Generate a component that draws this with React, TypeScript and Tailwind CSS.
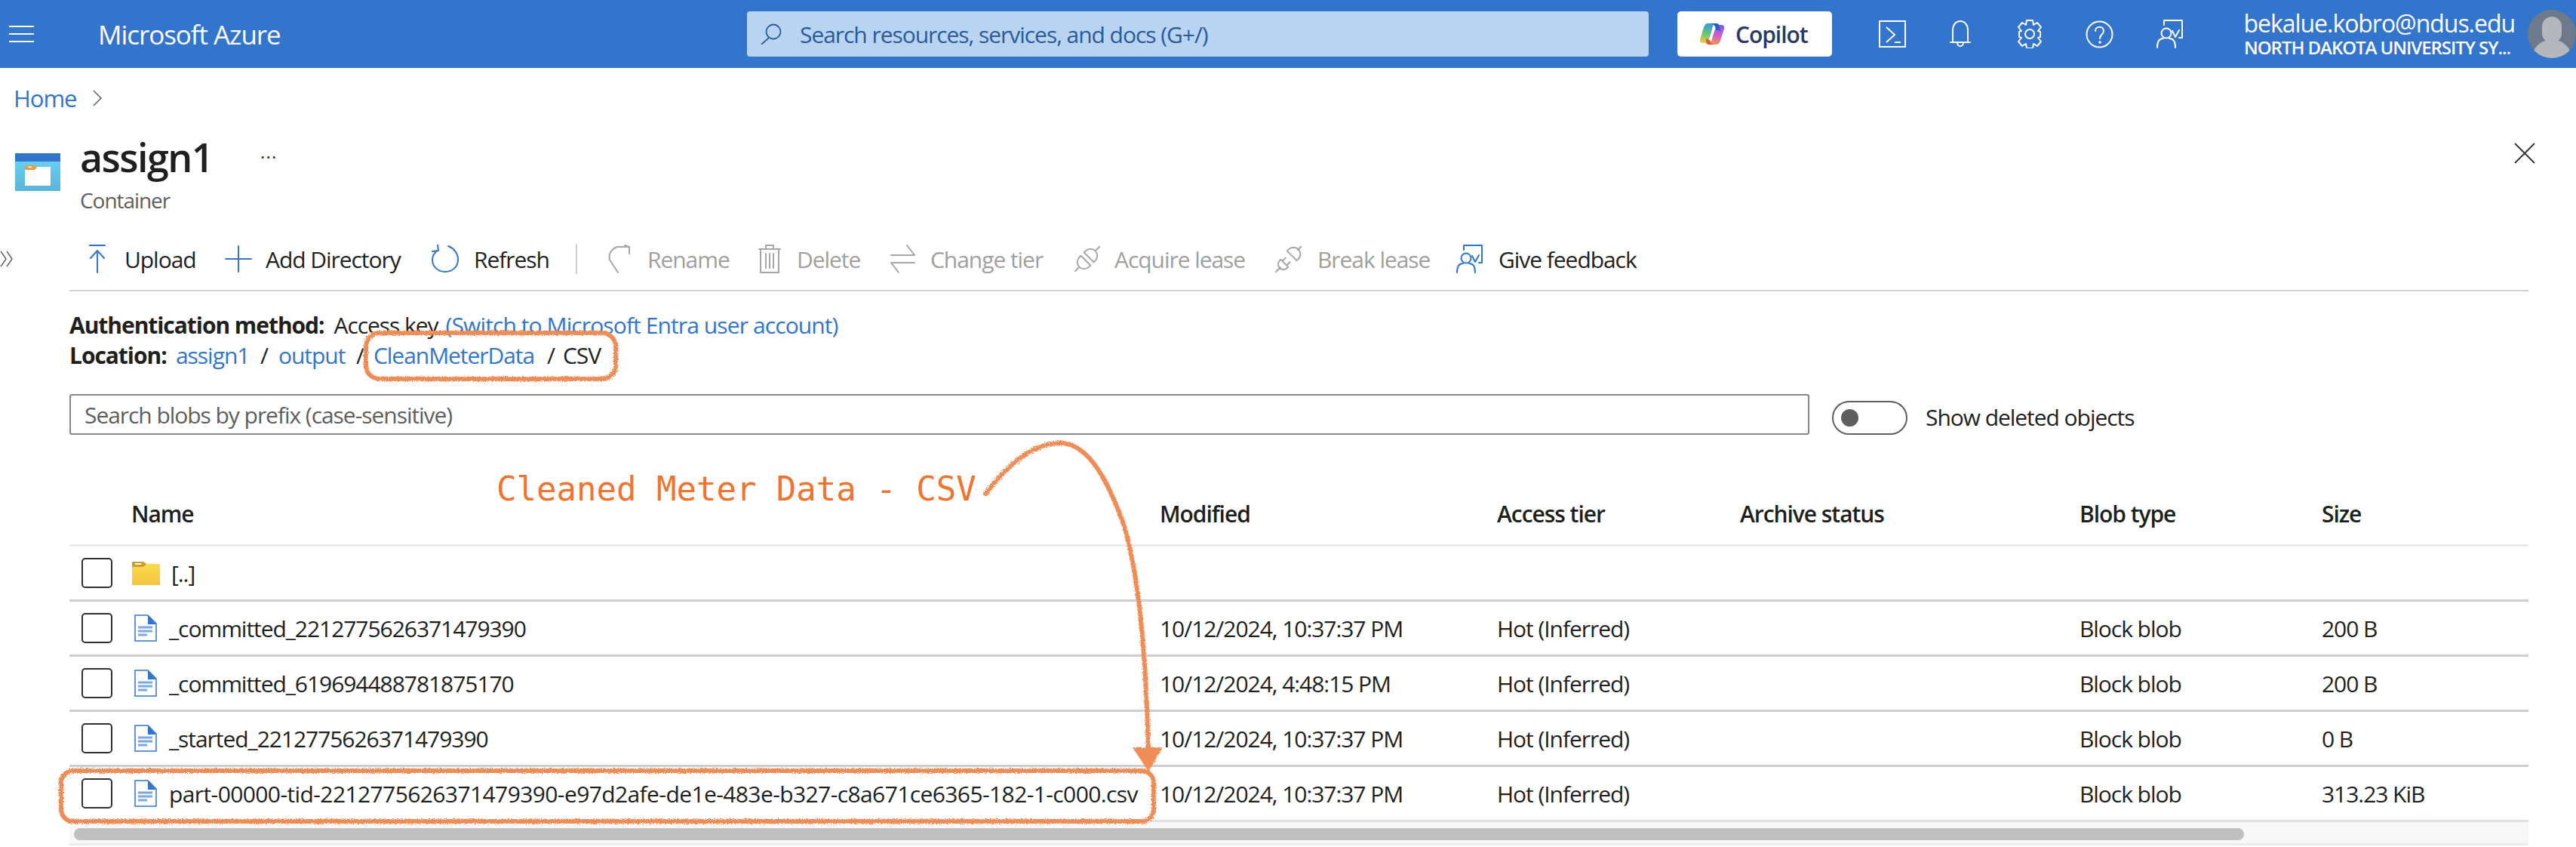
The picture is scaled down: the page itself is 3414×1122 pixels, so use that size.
import React from "react";

const S = ({ w, h, c = "currentColor", sw = 2, children }: { w: number; h: number; c?: string; sw?: number; children: React.ReactNode }) => (
  <svg width={w} height={h} viewBox={`0 0 ${w} ${h}`} fill="none" stroke={c} strokeWidth={sw} strokeLinecap="round" strokeLinejoin="round" className="shrink-0">
    {children}
  </svg>
);

const Feedback = ({ c }: { c: string }) => (
  <S w={36} h={38} c={c} sw={2}>
    <path d="M10 7V1h24v23h-4M21 15l4 8 5-9" />
    <circle cx="13" cy="18" r="6.5" />
    <path d="M1 37c0-10 4-12 8-12M17 25c4 0 8 2 8 12" />
  </S>
);

const Plug = ({ broken }: { broken?: boolean }) => (
  <S w={36} h={38} c="#a6a6a6" sw={2}>
    <g transform="rotate(-45 18 19)">
      {broken ? (
        <path d="M-6 19H2M10 12H8a7 7 0 0 0 0 14h2zM10 15h6M10 23h6M24 10h3a8 8 0 0 1 0 18h-3zM35 19h6" />
      ) : (
        <path d="M-5 19H3M15 10h-3a9 9 0 0 0 0 18h3zM21 10h3a9 9 0 0 1 0 18h-3zM33 19h8" />
      )}
    </g>
  </S>
);

const icons: Record<string, React.ReactNode> = {
  upload: (
    <S w={22} h={38} c="#3275cd">
      <path d="M0 1h21M11 37V8M2 18l9-10 9 10" />
    </S>
  ),
  add: (
    <S w={36} h={36} c="#3275cd">
      <path d="M18 1v34M1 18h34" />
    </S>
  ),
  refresh: (
    <S w={36} h={38} c="#3275cd">
      <path d="M9 8C3 12 1 17 1 21c0 9 7 16 17 16s17-7 17-16c0-8-5-15-13-18M8 1l1 8-8 1" transform="translate(0 -1)" />
    </S>
  ),
  rename: (
    <S w={30} h={38} c="#a6a6a6">
      <path d="M12 3C4 6 0 13 2 20l11 17M12 3h16M22 1l6 2v9" />
    </S>
  ),
  del: (
    <S w={30} h={38} c="#a6a6a6">
      <path d="M1 6h28M10 6V1h10v5M3 6v31h24V6M10 12v19M15 12v19M20 12v19" />
    </S>
  ),
  tier: (
    <S w={33} h={38} c="#a6a6a6">
      <path d="M1 14h31M22 1l10 13M32 24H1M11 37L1 24" />
    </S>
  ),
  acquire: <Plug />,
  brk: <Plug broken />,
  feedback: <Feedback c="#3275cd" />,
};

const tools = [
  { k: "upload", t: "Upload", w: "w-[180px]", i: "w-[47px]", d: false },
  { k: "add", t: "Add Directory", w: "w-[274px]", i: "w-[54px]", d: false },
  { k: "refresh", t: "Refresh", w: "w-[191px]", i: "w-[56px]", d: false },
  { k: "sep", t: "", w: "w-[43px]", i: "", d: false },
  { k: "rename", t: "Rename", w: "w-[199px]", i: "w-[52px]", d: true },
  { k: "del", t: "Delete", w: "w-[175px]", i: "w-[51px]", d: true },
  { k: "tier", t: "Change tier", w: "w-[243px]", i: "w-[53px]", d: true },
  { k: "acquire", t: "Acquire lease", w: "w-[267px]", i: "w-[54px]", d: true },
  { k: "brk", t: "Break lease", w: "w-[240px]", i: "w-[56px]", d: true },
  { k: "feedback", t: "Give feedback", w: "w-[260px]", i: "w-[56px]", d: false },
];

const rows = [
  { n: "_committed_2212775626371479390", m: "10/12/2024, 10:37:37 PM", s: "200 B" },
  { n: "_committed_619694488781875170", m: "10/12/2024, 4:48:15 PM", s: "200 B" },
  { n: "_started_2212775626371479390", m: "10/12/2024, 10:37:37 PM", s: "0 B" },
  { n: "part-00000-tid-2212775626371479390-e97d2afe-de1e-483e-b327-c8a671ce6365-182-1-c000.csv", m: "10/12/2024, 10:37:37 PM", s: "313.23 KiB" },
];

const grid = "grid grid-cols-[82px_1363px_447px_322px_450px_321px_274px] items-center";

const Checkbox = () => <div className="ml-4 w-[41px] h-[40px] rounded-[5px] border-2 border-[#323130]" />;

const FileIcon = () => (
  <svg width="30" height="36" viewBox="0 0 30 36" className="shrink-0 ml-[4px]">
    <path d="M1 1h17l11 11v23H1z" fill="#fff" stroke="#3275cd" strokeWidth="1.5" />
    <path d="M18 1l11 12H18z" fill="#3275cd" />
    <path d="M5 17h19M5 22h19M5 27h12" stroke="#7aa7e6" strokeWidth="3" />
  </svg>
);

const FolderIcon = () => (
  <svg width="37" height="31" viewBox="0 0 37 31" className="shrink-0 ml-[1px]">
    <defs>
      <linearGradient id="fold" x1="0" y1="0" x2="0" y2="1">
        <stop offset="0" stopColor="#fbdc4e" />
        <stop offset="1" stopColor="#f5c33d" />
      </linearGradient>
    </defs>
    <rect x="0" y="3" width="37" height="28" fill="url(#fold)" />
    <path d="M0 0h15l4 3-4 4H0z" fill="#cf9e2f" />
    <rect x="4" y="2" width="8" height="2" fill="#fff" />
  </svg>
);

const Cell = ({ children, cls = "" }: { children?: React.ReactNode; cls?: string }) => (
  <div className={`whitespace-nowrap ${cls}`}>{children}</div>
);

export default function App() {
  return (
    <div className="relative w-[3414px] h-[1122px] overflow-hidden bg-white text-[#201f1e] font-['Open_Sans',sans-serif] text-[30px] tracking-[-0.035em]">
      {/* top bar */}
      <header className="h-[90px] bg-[#3375cd] flex items-center text-white">
        <div className="ml-[12px] w-[118px] shrink-0">
          <svg width="33" height="24" viewBox="0 0 33 24" stroke="#fff" strokeWidth="2">
            <path d="M0 2h33M0 12h33M0 22h33" />
          </svg>
        </div>
        <div className="w-[860px] shrink-0 text-[35px] font-medium leading-none">Microsoft Azure</div>
        <div className="w-[1195px] h-[60px] shrink-0 rounded-[4px] bg-[#b9d4f1] flex items-center pl-[18px] text-[#2a5a9a]">
          <svg width="28" height="28" viewBox="0 0 28 28" fill="none" stroke="#2a5a9a" strokeWidth="1.8" className="shrink-0">
            <circle cx="17" cy="11" r="9.5" />
            <path d="M11 19L1 28" />
          </svg>
          <span className="ml-[24px]">Search resources, services, and docs (G+/)</span>
        </div>
        <div className="ml-[38px] w-[205px] h-[60px] shrink-0 rounded-[5px] bg-white flex items-center pl-[29px] text-[#2c3a63] font-semibold">
          <svg width="35" height="32" viewBox="0 0 35 32" className="shrink-0">
            <defs>
              <linearGradient id="cpA" x1="0.5" y1="0" x2="0.2" y2="1">
                <stop offset="0" stopColor="#3b9be0" />
                <stop offset="0.5" stopColor="#62c57a" />
                <stop offset="1" stopColor="#f2d03a" />
              </linearGradient>
              <linearGradient id="cpB" x1="0.6" y1="0" x2="0.4" y2="1">
                <stop offset="0" stopColor="#8a5ae6" />
                <stop offset="0.55" stopColor="#d45fc4" />
                <stop offset="1" stopColor="#f59a4a" />
              </linearGradient>
            </defs>
            <path d="M11 2h11c-2 0-3 1-4 4l-3 11-3 8c-1 2-2 3-4 3H5c-3 0-5-2-4-5L6 7c1-3 3-5 5-5z" fill="url(#cpA)" />
            <path d="M23 30H12c2 0 3-1 4-4l3-11 3-8c1-2 2-3 4-3h3c3 0 5 2 4 5l-5 16c-1 3-3 5-5 5z" fill="url(#cpB)" />
            <path d="M14 2h9c2 0 4 2 4 5l1 5-6-2c0-3-2-8-8-8z" fill="#1f5fd0" />
            <path d="M9 22l5 2c1 3 3 6 8 6h-9c-3 0-4-2-4-5z" fill="#e8593a" />
            <path d="M20 9l-5 15" stroke="#fff" strokeWidth="2" />
          </svg>
          <span className="ml-[13px]">Copilot</span>
        </div>
        <div className="ml-[62px] w-[36px] h-[36px] shrink-0 border-2 border-white flex items-center justify-center">
          <svg width="28" height="28" viewBox="0 0 28 28" fill="none" stroke="#fff" strokeWidth="2">
            <path d="M6 5l11 10L6 25M17 25h8" />
          </svg>
        </div>
        <div className="ml-[52px] w-[40px] flex justify-center shrink-0">
          <S w={28} h={36} c="#fff">
            <path d="M1 29h26M4 29V13C4 6 8 1 14 1s10 5 10 12v16M10 29c0 7 8 7 8 0" />
          </S>
        </div>
        <div className="ml-[52px] w-[40px] flex justify-center shrink-0">
          <S w={36} h={38} c="#fff">
            <circle cx="18" cy="19" r="6" />
            <path d="M14 1h8l1 6 5-3 5 6-4 5 3 1v7l-3 1 4 5-5 6-5-3-1 6h-8l-1-6-5 3-5-6 4-5-3-1v-7l3-1-4-5 5-6 5 3z" />
          </S>
        </div>
        <div className="ml-[52px] w-[40px] flex justify-center shrink-0">
          <S w={37} h={37} c="#fff">
            <circle cx="18.5" cy="18.5" r="17" />
            <path d="M13 14c0-7 11-7 11 0 0 5-5 4-5 10" />
            <circle cx="19" cy="29" r="0.8" />
          </S>
        </div>
        <div className="ml-[56px] w-[36px] flex justify-center shrink-0">
          <Feedback c="#fff" />
        </div>
        <div className="w-[456px] shrink-0 pr-[17px] flex flex-col items-end leading-none">
          <div className="text-[32px] leading-[36px]">bekalue.kobro@ndus.edu</div>
          <div className="text-[24px] leading-[28px] font-semibold mr-[6px]">NORTH DAKOTA UNIVERSITY SY...</div>
        </div>
        <div className="relative w-[64px] h-[64px] shrink-0 rounded-full bg-[#6c7a8b] overflow-hidden">
          <div className="absolute left-[19px] top-[9px] w-[26px] h-[35px] rounded-full bg-[#b4b7bc]" />
          <div className="absolute left-[6px] top-[40px] w-[52px] h-[34px] rounded-t-[24px] bg-[#b4b7bc]" />
        </div>
      </header>

      {/* breadcrumb */}
      <div className="h-[84px] pl-[18px] pb-[4px] flex items-center text-[#3275cd] text-[31px]">
        Home
        <svg width="12" height="22" viewBox="0 0 12 22" fill="none" stroke="#605e5c" strokeWidth="1.5" className="ml-[22px]">
          <path d="M1 1l10 10L1 21" />
        </svg>
      </div>

      {/* title */}
      <div className="h-[137px] pl-[20px] flex items-start">
        <svg width="60" height="50" viewBox="0 0 60 50" className="shrink-0 mt-[29px]">
          <defs>
            <linearGradient id="cont" x1="0" y1="0" x2="0" y2="1">
              <stop offset="0" stopColor="#6ad6f8" />
              <stop offset="1" stopColor="#5ab4d8" />
            </linearGradient>
          </defs>
          <rect x="0" y="0" width="60" height="50" fill="url(#cont)" />
          <rect x="0" y="0" width="60" height="11" fill="#3275cd" />
          <rect x="13" y="18" width="34" height="25" fill="#fff" />
          <path d="M13 16h13l3 3-3 3H13z" fill="#ea9a44" />
          <rect x="17" y="17.5" width="5" height="1.5" fill="#fff" />
        </svg>
        <div className="ml-[26px] -mt-[2px] flex flex-col">
          <div className="flex items-center">
            <span className="text-[52px] leading-[72px] font-semibold tracking-[-0.03em] w-[239px]">assign1</span>
            <span className="text-[#323130] text-[24px] leading-none tracking-[0.05em] -mt-[14px]">...</span>
          </div>
          <div className="text-[#605e5c] text-[28px] leading-[34px] mt-[4px]">Container</div>
        </div>
        <svg width="28" height="28" viewBox="0 0 28 28" stroke="#323130" strokeWidth="1.8" className="ml-auto mr-[54px] mt-[15px]">
          <path d="M1 1l26 26M27 1L1 27" />
        </svg>
      </div>

      {/* toolbar */}
      <div className="relative ml-[92px] mr-[63px] h-[64px] flex items-center pl-[26px]">
        <svg width="18" height="22" viewBox="0 0 18 22" fill="none" stroke="#605e5c" strokeWidth="1.4" className="absolute -left-[92px] top-[21px]">
          <path d="M1 1l7 10-7 10M9 1l7 10-7 10" />
        </svg>
        {tools.map((t) =>
          t.k === "sep" ? (
            <div key={t.k} className={`${t.w} shrink-0 h-[40px] flex`}>
              <div className="w-[2px] h-[40px] bg-[#d2d0ce]" />
            </div>
          ) : (
            <div key={t.k} className={`${t.w} shrink-0 flex items-center ${t.d ? "text-[#a19f9d]" : "text-[#201f1e]"}`}>
              <div className={`${t.i} shrink-0 flex`}>{icons[t.k]}</div>
              <span className="whitespace-nowrap">{t.t}</span>
            </div>
          ),
        )}
      </div>
      <div className="ml-[92px] mr-[63px] mt-[9px] h-[2px] bg-[#d2d2d2]" />

      {/* info */}
      <div className="ml-[92px] mt-[25px] leading-[40px]">
        <div className="whitespace-nowrap">
          <span className="font-bold">Authentication method:</span>
          <span className="ml-[13px]">Access key</span>
          <span className="ml-[10px] text-[#3275cd] tracking-[-0.03em]">(Switch to Microsoft Entra user account)</span>
        </div>
        <div className="flex whitespace-nowrap">
          <span className="font-bold w-[141px]">Location:</span>
          <span className="text-[#3275cd] w-[112px]">assign1</span>
          <span className="w-[24px]">/</span>
          <span className="text-[#3275cd] w-[103px]">output</span>
          <span className="w-[23px]">/</span>
          <span className="text-[#3275cd] w-[230px]">CleanMeterData</span>
          <span className="w-[21px]">/</span>
          <span>CSV</span>
        </div>
      </div>

      {/* search row */}
      <div className="ml-[92px] mt-[31px] flex items-center h-[54px]">
        <div className="w-[2306px] h-[54px] shrink-0 rounded-[3px] border-2 border-[#8a8886] flex items-center pl-[18px] text-[#605e5c]">
          Search blobs by prefix (case-sensitive)
        </div>
        <div className="ml-[30px] w-[100px] h-[45px] shrink-0 rounded-full border-2 border-[#605e5c] flex items-center pl-[10px] mt-[8px]">
          <div className="w-[23px] h-[23px] rounded-full bg-[#605e5c]" />
        </div>
        <span className="ml-[24px] mt-[6px] whitespace-nowrap">Show deleted objects</span>
      </div>

      {/* table */}
      <div className="ml-[92px] mt-[64px] w-[3259px]">
        <div className={`${grid} h-[84px] border-b-[3px] border-[#edebe9] font-semibold`}>
          <div />
          <Cell>Name</Cell>
          <Cell>Modified</Cell>
          <Cell>Access tier</Cell>
          <Cell>Archive status</Cell>
          <Cell>Blob type</Cell>
          <Cell>Size</Cell>
        </div>
        <div className={`${grid} h-[73px] border-b-[3px] border-[#cfcfcf]`}>
          <Checkbox />
          <Cell cls="flex items-center">
            <FolderIcon />
            <span className="ml-[15px]">[..]</span>
          </Cell>
        </div>
        {rows.map((r, i) => (
          <div key={r.n} className={`${grid} h-[73px] border-b-[3px] ${i === 3 ? "border-[#e1e1e1]" : "border-[#cfcfcf]"}`}>
            <Checkbox />
            <Cell cls="flex items-center">
              <FileIcon />
              <span className={`ml-[16px] ${i === 3 ? "tracking-[-0.02em]" : ""}`}>{r.n}</span>
            </Cell>
            <Cell>{r.m}</Cell>
            <Cell>Hot (Inferred)</Cell>
            <div />
            <Cell>Block blob</Cell>
            <Cell>{r.s}</Cell>
          </div>
        ))}
        <div className="h-[31px] bg-[#f8f8f8] border-b-[3px] border-[#edebe9] pl-[6px] pt-[8px]">
          <div className="w-[2876px] h-[16px] rounded-full bg-[#c0c0c0]" />
        </div>
      </div>

      {/* annotations */}
      <div className="absolute left-[658px] top-[622px] font-['DejaVu_Sans_Mono',monospace] text-[44px] leading-[52px] tracking-[0px] text-[#ef7430] whitespace-nowrap">
        Cleaned Meter Data - CSV
      </div>
      <svg width="3414" height="1122" viewBox="0 0 3414 1122" fill="none" className="absolute left-0 top-0 pointer-events-none">
        <defs>
          <filter id="rough" x="-5%" y="-5%" width="110%" height="110%">
            <feTurbulence type="fractalNoise" baseFrequency="0.7" numOctaves="2" seed="3" />
            <feDisplacementMap in="SourceGraphic" scale="5" />
          </filter>
        </defs>
        <g stroke="#f08c55" strokeWidth="6" filter="url(#rough)">
          <rect x="485" y="441" width="331" height="61" rx="18" />
          <rect x="81" y="1021" width="1448" height="67" rx="16" />
          <path d="M1306 654C1340 610 1375 585 1408 587C1445 590 1470 640 1491 700C1510 770 1518 860 1522 992" strokeLinecap="round" />
          <path d="M1501 990h40l-19 32z" fill="#f08c55" stroke="none" />
        </g>
      </svg>
    </div>
  );
}
